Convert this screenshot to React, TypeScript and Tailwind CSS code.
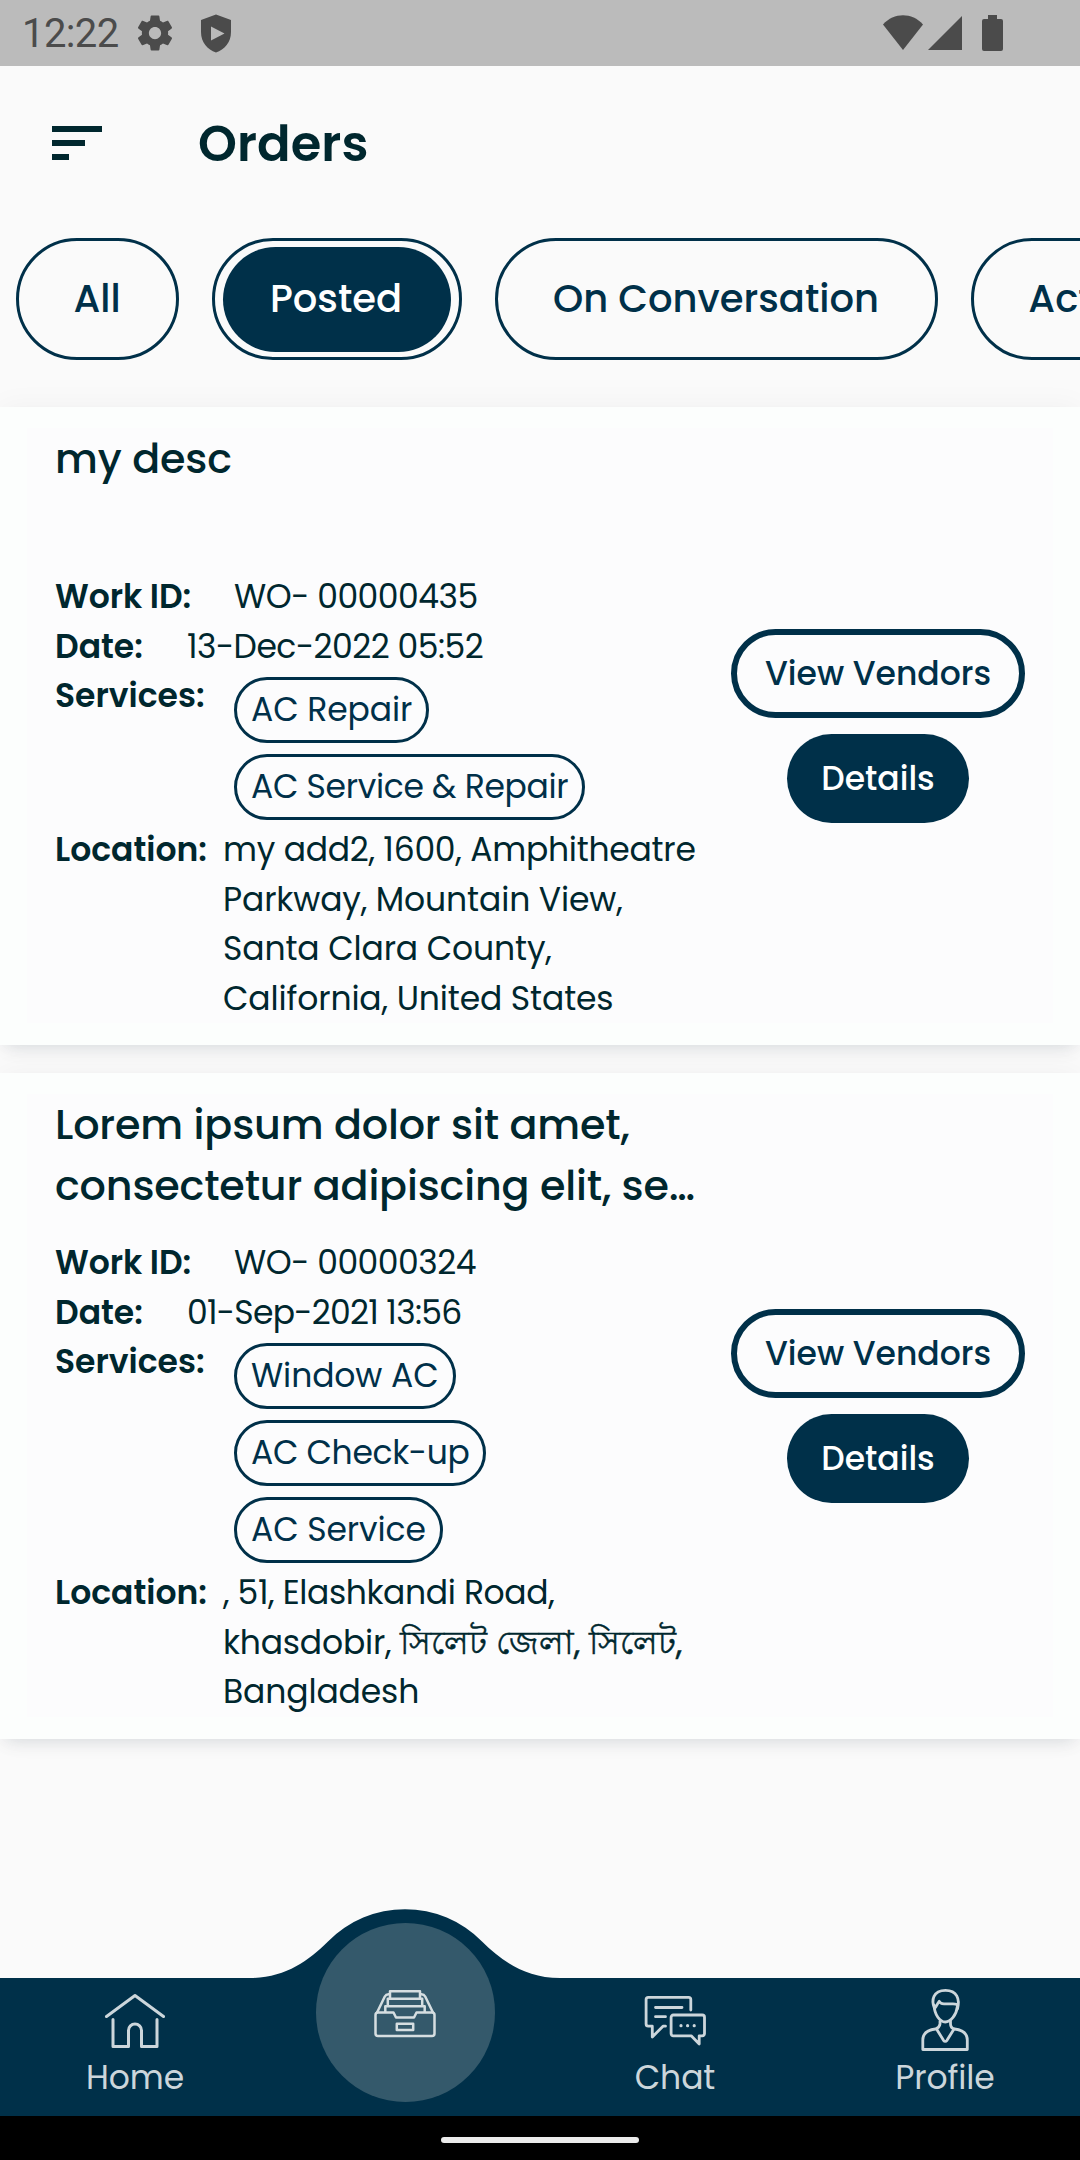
import React from 'react';

type Order = {
  title: string;
  workId: string;
  date: React.ReactNode;
  services: React.ReactNode[];
  location: React.ReactNode;
};

const orders: Order[] = [
  {
    title: 'my desc',
    workId: 'WO- 00000435',
    date: <span className="tracking-[-0.5px]">13-Dec-2022 05:52</span>,
    services: ['AC Repair', <span className="tracking-[-0.32px]">AC Service &amp; Repair</span>],
    location: (
      <>
        <span className="tracking-[-0.25px]">my add2, 1600, Amphitheatre</span> Parkway, Mountain View, Santa Clara County,
        California, United States
      </>
    ),
  },
  {
    title: 'Lorem ipsum dolor sit amet, consectetur adipiscing elit, se…',
    workId: 'WO- 00000324',
    date: <span className="tracking-[-0.7px]">01-Sep-2021 13:56</span>,
    services: ['Window AC', <span className="tracking-[-0.35px]">AC Check-up</span>, 'AC Service'],
    location: (
      <>
        <span className="tracking-[-0.38px]">, 51, Elashkandi Road,</span> <span className="tracking-[-0.2px]">khasdobir, </span>
        <span className="text-[32.5px] leading-none tracking-normal [-webkit-text-stroke:0.5px_#00272e]">সিলেট জেলা, সিলেট,</span> Bangladesh
      </>
    ),
  },
];

function StatusBar() {
  return (
    <div className="flex h-[66px] shrink-0 items-center bg-[#bbbbbb] text-[#4b4b4b]">
      <span className="mt-[2px] ml-[22px] w-[112px] font-['Roboto'] text-[40px] leading-[66px] tracking-[-0.6px]">12:22</span>
      <svg viewBox="0 0 24 24" className="h-[42px] w-[42px]" fill="currentColor">
        <path d="M19.43 12.98c.04-.32.07-.64.07-.98s-.03-.66-.07-.98l2.11-1.65c.19-.15.24-.42.12-.64l-2-3.46c-.12-.22-.39-.3-.61-.22l-2.49 1c-.52-.4-1.08-.73-1.69-.98l-.38-2.65A.49.49 0 0 0 14 2h-4c-.25 0-.46.18-.49.42l-.38 2.65c-.61.25-1.17.59-1.69.98l-2.49-1c-.23-.09-.49 0-.61.22l-2 3.46c-.13.22-.07.49.12.64l2.11 1.65c-.04.32-.07.65-.07.98s.03.66.07.98l-2.11 1.65c-.19.15-.24.42-.12.64l2 3.46c.12.22.39.3.61.22l2.49-1c.52.4 1.08.73 1.69.98l.38 2.65c.03.24.24.42.49.42h4c.25 0 .46-.18.49-.42l.38-2.65c.61-.25 1.17-.59 1.69-.98l2.49 1c.23.09.49 0 .61-.22l2-3.46c.12-.22.07-.49-.12-.64l-2.11-1.65zM12 15.5c-1.93 0-3.5-1.57-3.5-3.5s1.57-3.5 3.5-3.5 3.5 1.57 3.5 3.5-1.57 3.5-3.5 3.5z" />
      </svg>
      <svg viewBox="0 0 32 39" className="ml-[24px] h-[39px] w-[32px]" fill="currentColor">
        <path fillRule="evenodd" d="M16 0.5 31 6v12c0 10.500-6.500 17.500-15 20.500C7.500 35.500 1 28.500 1 18V6L16 .5zM11 12.500v14L24.500 19.500 11 12.500z" />
      </svg>
      <svg viewBox="0 0 42 36" className="ml-auto h-[36px] w-[42px]" fill="currentColor">
        <path d="M1 9.500C12-2.800 30-2.800 41 9.500L21 35z" />
      </svg>
      <svg viewBox="0 0 34 34" className="ml-[4px] h-[34px] w-[34px]" fill="currentColor">
        <path d="M34 0v34H0z" />
      </svg>
      <svg viewBox="0 0 21 36" className="mr-[77px] ml-[20px] h-[36px] w-[21px]" fill="currentColor">
        <path d="M6 0h9v4h4a2 2 0 0 1 2 2v28a2 2 0 0 1-2 2H2a2 2 0 0 1-2-2V6a2 2 0 0 1 2-2h4z" />
      </svg>
    </div>
  );
}

function Header() {
  return (
    <header className="flex h-[154px] shrink-0 items-center pl-[52px] text-[#00272e]">
      <div className="flex h-[34px] w-[146px] flex-col justify-between">
        <div className="h-[6px] w-[50px] bg-[#00272e]" />
        <div className="h-[6px] w-[33px] bg-[#00272e]" />
        <div className="h-[6px] w-[17px] bg-[#00272e]" />
      </div>
      <h1 className="mt-[2px] text-[49.5px] leading-[74px] font-semibold tracking-[0.1px]">Orders</h1>
    </header>
  );
}

function Filters() {
  const chip = 'flex h-[122px] shrink-0 items-center justify-center rounded-[61px] border-[3px] border-[#003049]';
  return (
    <nav className="flex h-[187px] shrink-0 gap-[33px] overflow-hidden pt-[18px] pl-[16px] text-[38.5px] font-medium text-[#003049]">
      <div className={`${chip} w-[163px] pr-[1px]`}>All</div>
      <div className={`${chip} w-[250px]`}>
        <div className="flex h-[105px] w-[228px] items-center justify-center rounded-[53px] bg-[#003049] pr-[2px] text-white">Posted</div>
      </div>
      <div className={`${chip} w-[443px] pr-[1px]`}>On Conversation</div>
      <div className={`${chip} w-[235px]`}>Active</div>
    </nav>
  );
}

function OrderCard({ order }: { order: Order }) {
  return (
    <article className="bg-[#fcfefd] pt-[21px] shadow-[0_8px_16px_-6px_rgba(0,30,60,0.12),0_0_28px_rgba(0,40,46,0.045)]">
      <div className="mx-[27px] flex items-center bg-[#fcfcfd] pl-[28px]">
        <div className="w-[646px] text-[33px] leading-[49.5px] text-[#00272e]">
          <h2 className="h-[122px] w-[655px] text-[41.25px] leading-[61px] font-medium tracking-[-0.15px]">{order.title}</h2>
          <div className="mt-[22px] flex gap-[43px]">
            <b className="font-semibold tracking-[-0.1px]">Work ID:</b>
            <span className="tracking-[-0.5px]">{order.workId}</span>
          </div>
          <div className="flex gap-[44px]">
            <b className="font-semibold">Date:</b>
            {order.date}
          </div>
          <div className="flex">
            <b className="w-[179px] shrink-0 font-semibold">Services:</b>
            <div className="flex flex-col items-start">
              {order.services.map((s, i) => (
                <span
                  key={i}
                  className="my-[5.5px] flex h-[66px] items-center rounded-[33px] border-[3px] border-[#003049] px-[14px] leading-[60px] tracking-[-0.1px] text-[#003049]"
                >
                  {s}
                </span>
              ))}
            </div>
          </div>
          <div className="flex">
            <b className="w-[168px] shrink-0 font-semibold">Location:</b>
            <p className="-mr-[12px] w-[490px] shrink-0 tracking-[-0.13px]">{order.location}</p>
          </div>
        </div>
        <div className="mt-[1px] ml-[30px] flex w-[294px] flex-col items-center gap-[16px] text-[33px] font-medium">
          <button className="h-[89px] w-[294px] rounded-[45px] border-[6px] border-[#003049] text-[#003049]">View Vendors</button>
          <button className="h-[89px] w-[182px] rounded-[45px] bg-[#003049] text-white">Details</button>
        </div>
      </div>
      <div className="h-[22px]" />
    </article>
  );
}

function HomeIcon() {
  return (
    <svg viewBox="0 0 90 80" className="h-[80px] w-[90px]" fill="none" stroke="currentColor" strokeWidth="3" strokeLinecap="round" strokeLinejoin="round">
      <path d="M16.500 36.500 45 15.500 73.500 36.500M23 39.500V66.500H38.500V50.500a6.500 6.500 0 0 1 13 0V66.500H67V39.500" />
    </svg>
  );
}

function ChatIcon() {
  return (
    <svg viewBox="0 0 90 80" className="h-[80px] w-[90px]" fill="none" stroke="currentColor" strokeWidth="2.800" strokeLinecap="round" strokeLinejoin="round">
      <path d="M60.800 30V19.500a2.200 2.200 0 0 0-2.200-2.200H18.300a2.200 2.200 0 0 0-2.200 2.200V44a2.200 2.200 0 0 0 2.200 2.200H22.300V57L33 46.200H35.500M25.500 27.500H52M25.500 36.700H35.500" />
      <path d="M43.300 35H72.300a2.200 2.200 0 0 1 2.200 2.200V53.600a2.200 2.200 0 0 1-2.200 2.200H69.200V64L61.200 55.800H43.300a2.200 2.200 0 0 1-2.200-2.200V37.200a2.200 2.200 0 0 1 2.200-2.200z" />
      <path d="M51 45.700h.01M57.600 45.700h.01M64.200 45.700h.01" strokeWidth="3.200" />
    </svg>
  );
}

function ProfileIcon() {
  return (
    <svg viewBox="0 0 90 80" className="-mt-[1px] mb-[1px] h-[80px] w-[90px]" fill="none" stroke="currentColor" strokeWidth="2.800" strokeLinecap="round" strokeLinejoin="round">
      <path d="M34.500 29.500C31 21 33 11.500 45.500 11.300 57 11.300 60 20 57.500 30M34.500 29.500C36 28.500 37 25 39.200 22.300 40 24.500 42 24.800 44 24.800H53C55.500 24.800 57.500 25.500 58 27M34 26C34.500 36 40 43 45.300 43S56.500 36 57.500 27" />
      <path d="M40 42.500V45C39.500 48 37.500 49.500 35.500 50C27.500 51 22.800 54.500 22.800 61V70.500H67.300V61C67.300 54.500 62.500 51 54.500 50C52.500 49.500 50.500 48 50.500 45V42.500" />
      <path d="M36.500 50 43.500 61.300Q45.200 63.500 47 61.300L54 50" />
    </svg>
  );
}

function TrayIcon() {
  return (
    <svg viewBox="0 0 90 70" className="h-[70px] w-[90px]" fill="none" stroke="currentColor" strokeWidth="2.500" strokeLinejoin="round">
      <path d="M15.500 35a2.500 2.500 0 0 1 2.500-2.500H33.500L36 37.500H54L56.500 32.500H72a2.500 2.500 0 0 1 2.500 2.500V53.500a2.500 2.500 0 0 1-2.500 2.500H18a2.500 2.500 0 0 1-2.500-2.500z" />
      <path d="M36.800 43.700H53.200V50H36.800z" />
      <path d="M25.300 32V26.300H64.700V32M27.800 26V18.700H62.200V26M30 18.500V11.200H60V18.500" />
      <path d="M16.800 33 24.800 16.500Q26 14.300 28.500 14.300H30M73.200 33 65.200 16.500Q64 14.300 61.500 14.300H60" />
    </svg>
  );
}

function BottomNav() {
  const tab = 'flex w-[270px] flex-col items-center pt-[2px] text-[33px] leading-[50px] tracking-[-0.1px]';
  return (
    <footer className="relative mt-auto h-[138px] shrink-0 bg-[#003049] text-[#ccd6db]">
      <svg viewBox="0 0 310 70" className="absolute -top-[69px] left-[250px] h-[70px] w-[310px]" fill="#003049">
        <path d="M0 69C35 69 58 52 78 32.500A108 108 0 0 1 232 32.500C252 52 275 69 310 69V70H0z" />
      </svg>
      <div className="relative flex">
        <div className={tab}>
          <HomeIcon />
          <span className="-mt-[7px]">Home</span>
        </div>
        <div className={tab}>
          <div className="-mt-[57px] flex h-[179px] w-[179px] items-center justify-center rounded-full bg-[#34596b] pt-[5px] text-[#d6dee1]">
            <TrayIcon />
          </div>
        </div>
        <div className={tab}>
          <ChatIcon />
          <span className="-mt-[7px]">Chat</span>
        </div>
        <div className={tab}>
          <ProfileIcon />
          <span className="-mt-[7px]">Profile</span>
        </div>
      </div>
    </footer>
  );
}

export default function App() {
  return (
    <div className="flex h-[2160px] w-[1080px] flex-col overflow-hidden bg-[#fafafa] font-['Poppins','Inter',sans-serif]">
      <StatusBar />
      <Header />
      <Filters />
      <main className="flex flex-col gap-[28px]">
        {orders.map((o) => (
          <OrderCard key={o.workId} order={o} />
        ))}
      </main>
      <BottomNav />
      <div className="flex h-[44px] shrink-0 justify-center bg-black pt-[21px]">
        <div className="h-[6px] w-[198px] rounded-full bg-[#ebebeb]" />
      </div>
    </div>
  );
}
